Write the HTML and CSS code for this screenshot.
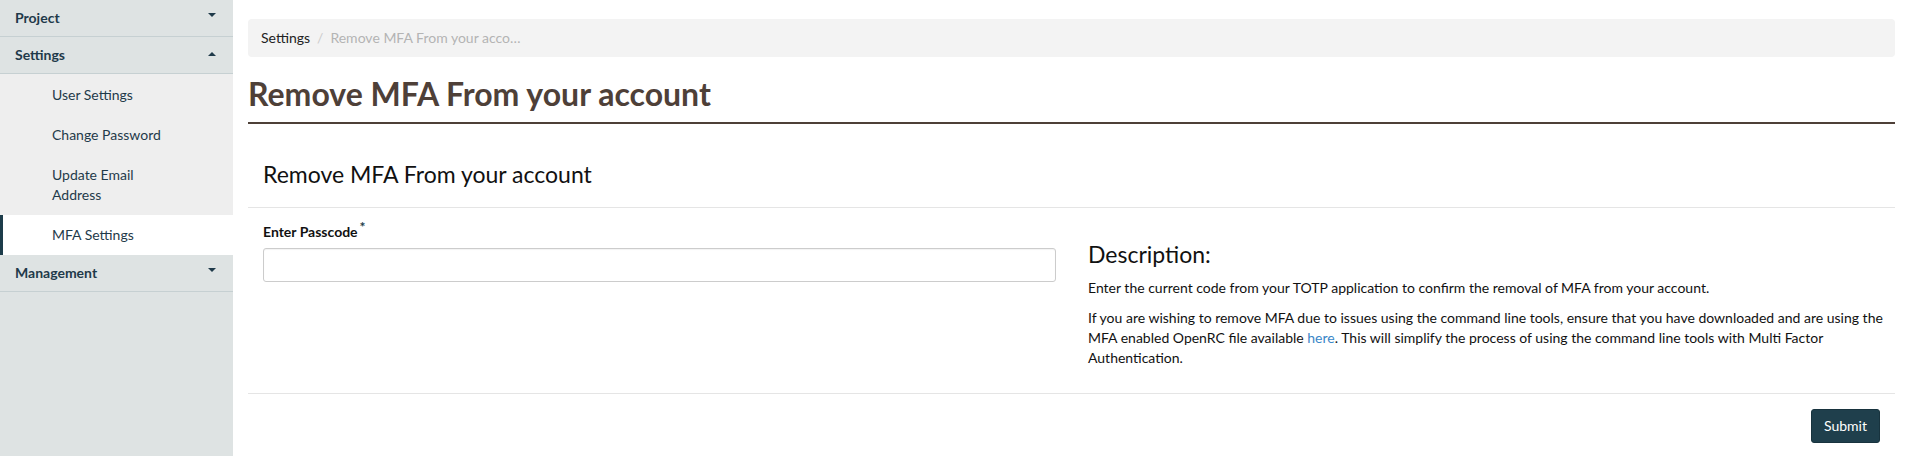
FILE: index.html
```html
<!DOCTYPE html>
<html lang="en">
<head>
<meta charset="utf-8">
<title>Remove MFA From your account</title>
<link rel="stylesheet" href="styles.css">
</head>
<body>
<div class="layout">
  <nav class="sidebar">
    <div class="nav-group">
      <div class="nav-header"><span>Project</span><span class="caret down"></span></div>
    </div>
    <div class="nav-group">
      <div class="nav-header"><span>Settings</span><span class="caret up"></span></div>
      <ul class="nav-sub">
        <li class="nav-item">User Settings</li>
        <li class="nav-item">Change Password</li>
        <li class="nav-item">Update Email<br>Address</li>
        <li class="nav-item active">MFA Settings</li>
      </ul>
    </div>
    <div class="nav-group">
      <div class="nav-header"><span>Management</span><span class="caret down"></span></div>
    </div>
  </nav>
  <main class="content">
    <ol class="breadcrumb">
      <li class="crumb">Settings</li>
      <li class="crumb sep">/</li>
      <li class="crumb current">Remove MFA From your acco…</li>
    </ol>
    <h1 class="page-title">Remove MFA From your account</h1>
    <form class="panel">
      <div class="panel-header">
        <h3 class="panel-title">Remove MFA From your account</h3>
      </div>
      <div class="panel-body">
        <div class="field">
          <label class="field-label">Enter Passcode<span class="req">*</span></label>
          <input class="field-input" type="text">
        </div>
        <div class="desc">
          <h3 class="desc-title">Description:</h3>
          <p class="desc-text">Enter the current code from your TOTP application to confirm the removal of MFA from your account.</p>
          <p class="desc-text">If you are wishing to remove MFA due to issues using the command line tools, ensure that you have downloaded and are using the MFA enabled OpenRC file available <a class="link" href="#">here</a>. This will simplify the process of using the command line tools with Multi Factor Authentication.</p>
        </div>
      </div>
      <div class="panel-footer">
        <button class="btn-submit" type="button">Submit</button>
      </div>
    </form>
  </main>
</div>
</body>
</html>
```
FILE: styles.css
```css
* { box-sizing: border-box; }
html, body { margin: 0; padding: 0; }
body {
  font-family: Lato, "Open Sans", "Liberation Sans", sans-serif;
  font-size: 14px;
  line-height: 20px;
  color: #222;
  background: #fff;
}
.layout {
  display: flex;
  min-height: 456px;
}
.sidebar {
  width: 233px;
  flex: 0 0 233px;
  background: #dee3e3;
  color: #1f3a4a;
}
.nav-header {
  height: 37px;
  display: flex;
  align-items: center;
  justify-content: space-between;
  padding: 0 17px 0 15px;
  font-weight: 700;
  font-size: 14px;
  border-bottom: 1px solid #c6d0d2;
}
.caret {
  width: 0;
  height: 0;
  border-left: 4px solid transparent;
  border-right: 4px solid transparent;
}
.caret.down { border-top: 4px solid #1f3a4a; margin-top: -6px; }
.caret.up { border-bottom: 4px solid #1f3a4a; margin-top: -3px; }
.nav-sub {
  list-style: none;
  margin: 0;
  padding: 1px 0 0;
  background: #eeeeee;
}
.nav-item {
  padding: 10px 15px 10px 52px;
  font-size: 14px;
  line-height: 20px;
  color: #1f3a4a;
}
.nav-item.active {
  background: #fff;
  border-left: 3px solid #1d3c4a;
  padding-left: 49px;
}
.content {
  flex: 1;
  padding: 19px 12px 0 15px;
}
.breadcrumb {
  list-style: none;
  margin: 0;
  padding: 9px 13px;
  background: #f3f3f3;
  border-radius: 4px;
  display: flex;
  gap: 5px;
  font-size: 14px;
  line-height: 20px;
}
.crumb { color: #222; }
.crumb.sep { color: #ccc; padding: 0 2px; }
.crumb.current { color: #b4b4b4; }
.page-title {
  margin: 19px 0 0;
  padding-bottom: 11px;
  font-size: 32px;
  line-height: 35px;
  font-weight: 700;
  color: #4e4038;
  border-bottom: 2px solid #4e4038;
}
.panel { margin: 0; }
.panel-header {
  padding: 38px 15px 21px;
  border-bottom: 1px solid #e5e5e5;
}
.panel-title {
  margin: 0;
  font-size: 23px;
  line-height: 24px;
  font-weight: 400;
  color: #111;
}
.panel-body {
  display: grid;
  grid-template-columns: 793px 1fr;
  column-gap: 32px;
  padding: 14px 0 15px 15px;
  border-bottom: 1px solid #e5e5e5;
}
.field-label {
  display: block;
  font-size: 14px;
  font-weight: 700;
  line-height: 20px;
  margin-bottom: 6px;
  color: #111;
}
.req {
  color: #1d3c4a;
  font-size: 14px;
  font-weight: 700;
  vertical-align: top;
  position: relative;
  top: -5px;
  margin-left: 2px;
}
.field-input {
  display: block;
  width: 100%;
  height: 34px;
  border: 1px solid #cccccc;
  border-radius: 3px;
  padding: 6px 12px;
  font: inherit;
  background: #fff;
  box-shadow: inset 0 1px 1px rgba(0,0,0,0.05);
}
.desc-title {
  margin: 20px 0 12px;
  font-size: 23px;
  line-height: 24px;
  font-weight: 400;
  color: #111;
}
.desc-text {
  margin: 0 0 10px;
  font-size: 14px;
  line-height: 20px;
  color: #111;
}
.link { color: #3a87c8; text-decoration: none; }
.panel-footer {
  display: flex;
  justify-content: flex-end;
  padding: 15px 15px 15px 15px;
}
.btn-submit {
  height: 34px;
  padding: 6px 12px;
  font: inherit;
  font-size: 14px;
  color: #fff;
  background: #1f3f4c;
  border: 1px solid #18333e;
  border-radius: 3px;
}
```
